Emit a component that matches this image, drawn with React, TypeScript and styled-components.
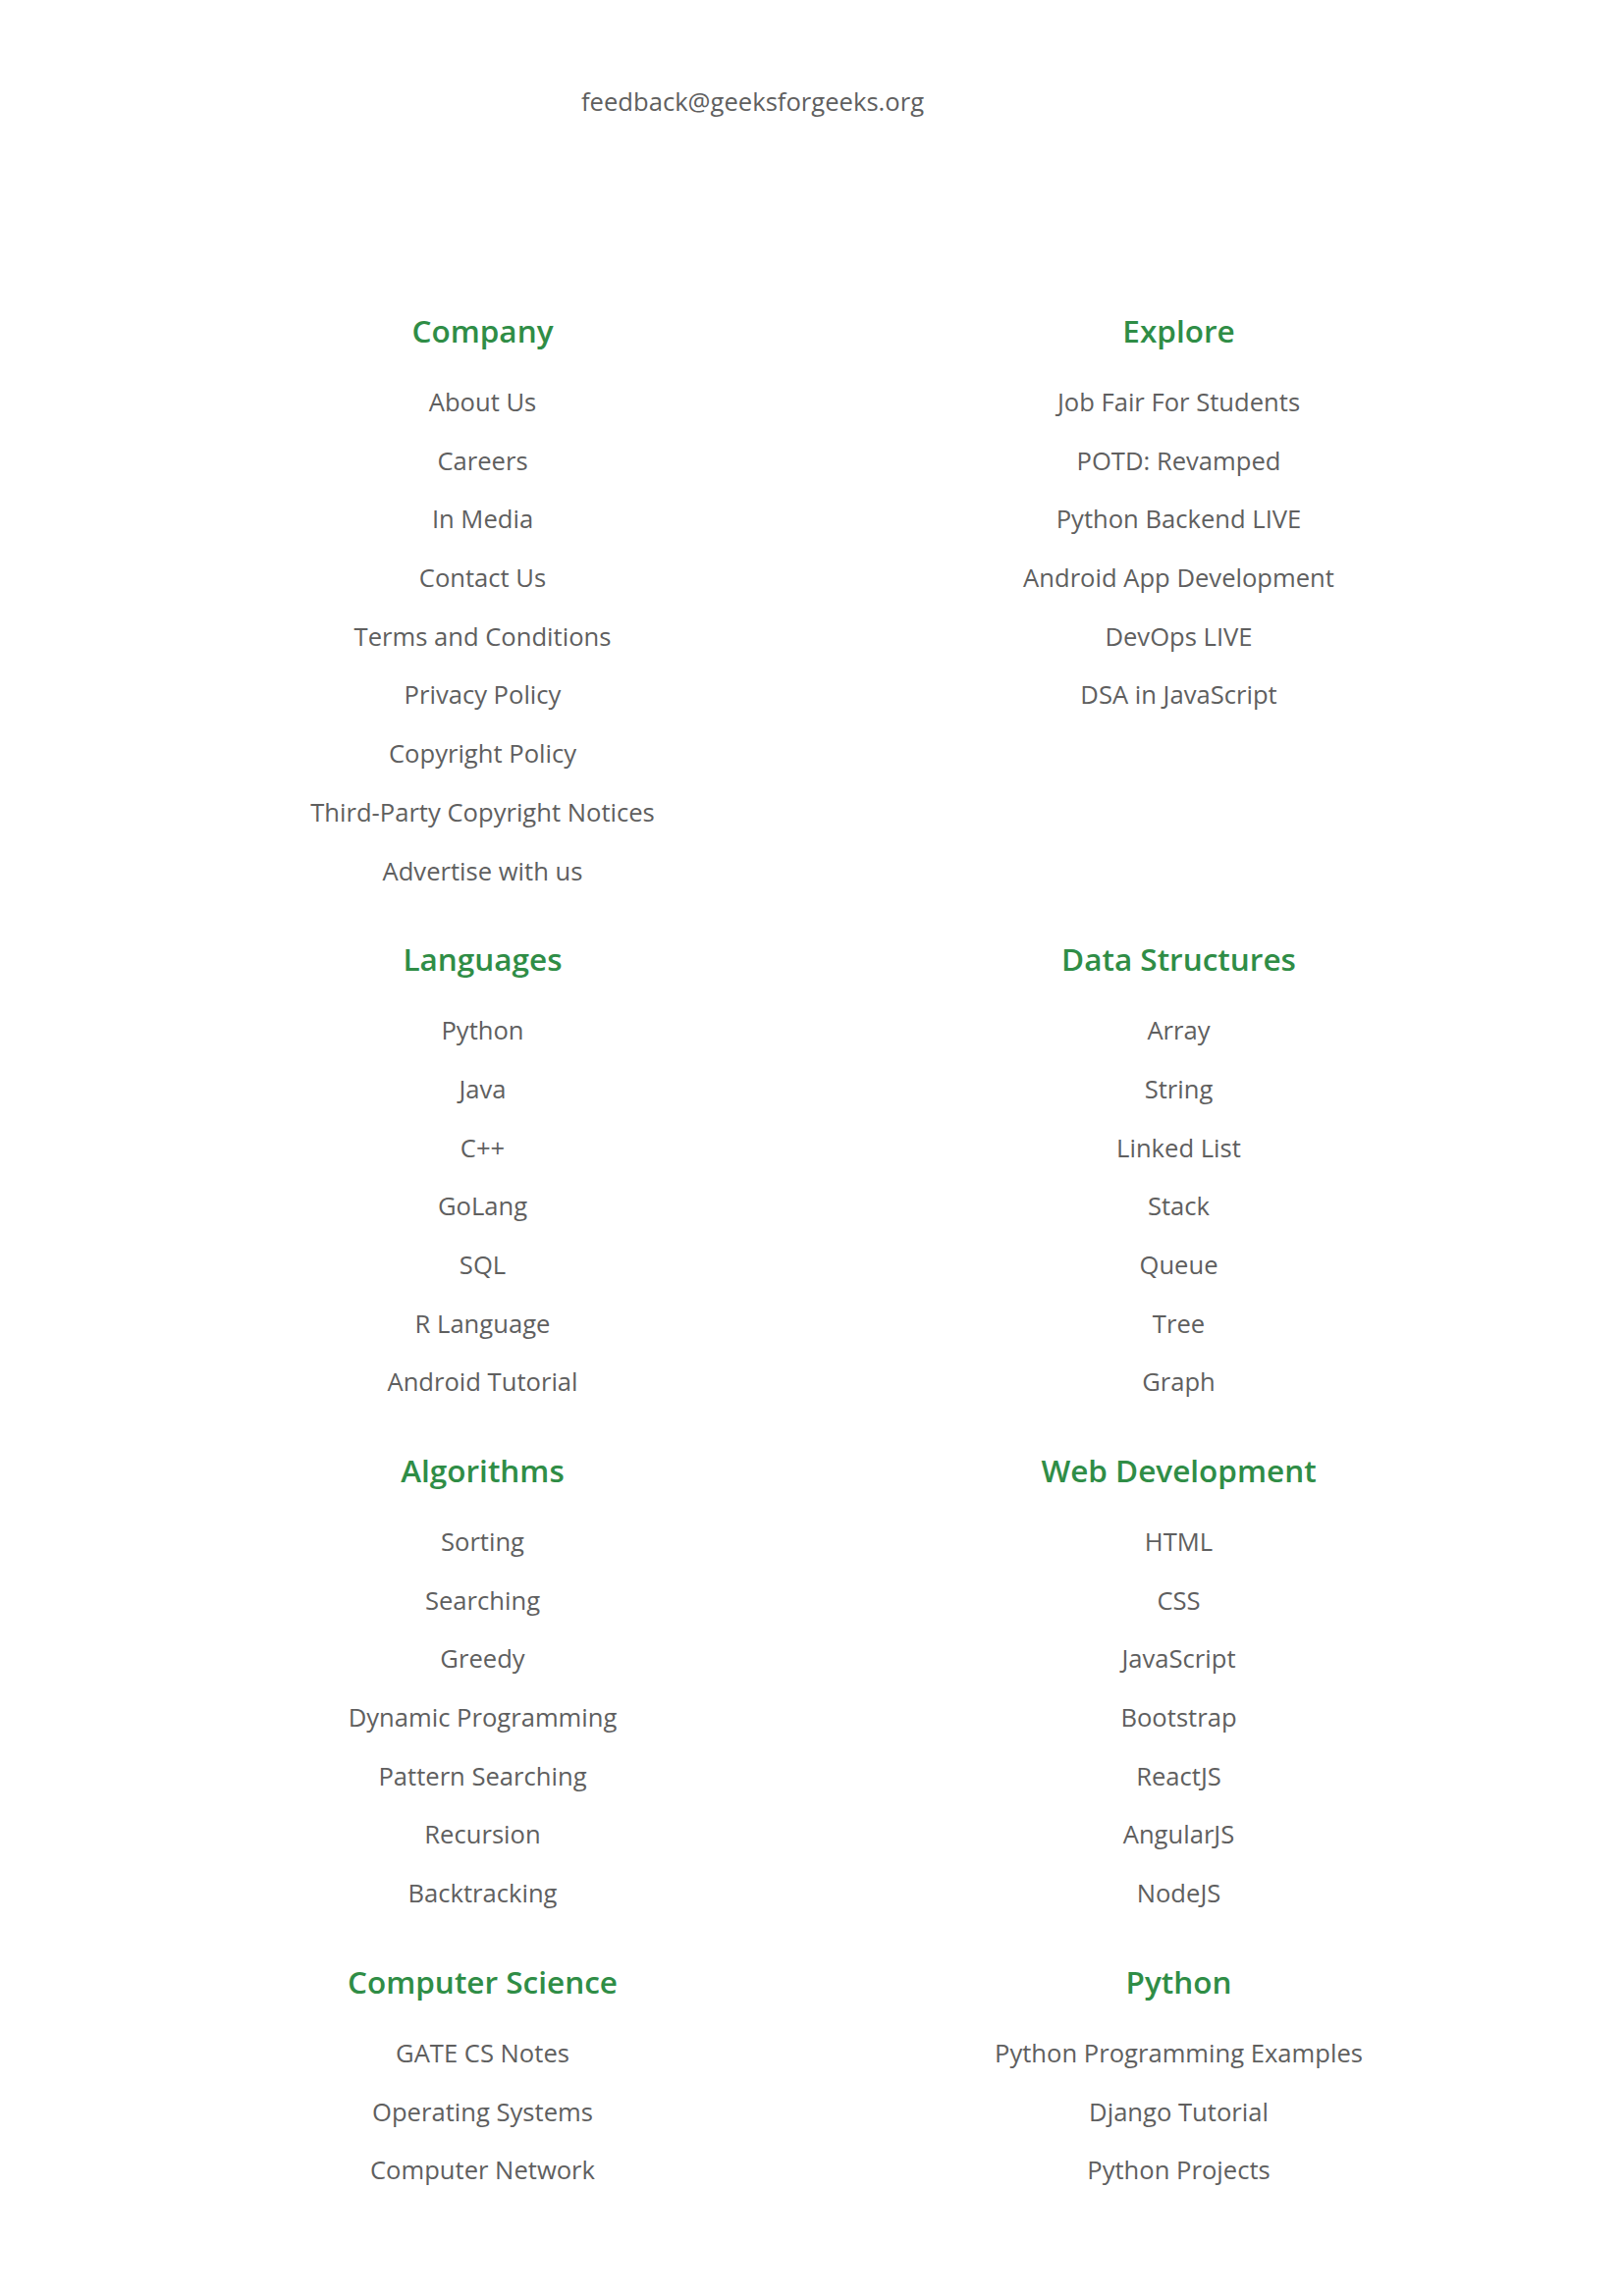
import styled, { createGlobalStyle } from "styled-components";

const GlobalStyle = createGlobalStyle`
  body {
    margin: 0;
    background: #fff;
    font-family: "Open Sans", "Noto Sans", sans-serif;
  }
`;

const sections = [
  {
    title: "Company",
    links: [
      "About Us",
      "Careers",
      "In Media",
      "Contact Us",
      "Terms and Conditions",
      "Privacy Policy",
      "Copyright Policy",
      "Third-Party Copyright Notices",
      "Advertise with us",
    ],
  },
  {
    title: "Explore",
    links: [
      "Job Fair For Students",
      "POTD: Revamped",
      "Python Backend LIVE",
      "Android App Development",
      "DevOps LIVE",
      "DSA in JavaScript",
    ],
  },
  {
    title: "Languages",
    links: ["Python", "Java", "C++", "GoLang", "SQL", "R Language", "Android Tutorial"],
  },
  {
    title: "Data Structures",
    links: ["Array", "String", "Linked List", "Stack", "Queue", "Tree", "Graph"],
  },
  {
    title: "Algorithms",
    links: [
      "Sorting",
      "Searching",
      "Greedy",
      "Dynamic Programming",
      "Pattern Searching",
      "Recursion",
      "Backtracking",
    ],
  },
  {
    title: "Web Development",
    links: ["HTML", "CSS", "JavaScript", "Bootstrap", "ReactJS", "AngularJS", "NodeJS"],
  },
  {
    title: "Computer Science",
    links: ["GATE CS Notes", "Operating Systems", "Computer Network"],
  },
  {
    title: "Python",
    links: ["Python Programming Examples", "Django Tutorial", "Python Projects"],
  },
];

const App = () => {
  return (
    <Footer>
      <GlobalStyle />
      <Contact>
        <Mail href="#">feedback@geeksforgeeks.org</Mail>
      </Contact>
      <LinkGrid>
        {sections.map(({ title, links }) => (
          <Section key={title}>
            <Heading>{title}</Heading>
            <LinkList>
              {links.map((link) => (
                <LinkItem key={link}>
                  <FooterLink href="#">{link}</FooterLink>
                </LinkItem>
              ))}
            </LinkList>
          </Section>
        ))}
      </LinkGrid>
    </Footer>
  );
};

const Footer = styled.footer`
  width: 100%;
  padding: 74px 0 60px;
  box-sizing: border-box;
`;

const Contact = styled.div`
  padding-left: 592px;
  height: 60px;
  margin-bottom: 182px;
  font-size: 25.6px;
  line-height: 60px;
`;

const Mail = styled.a`
  color: #5f5f5f;
  text-decoration: none;
`;

const LinkGrid = styled.div`
  display: grid;
  grid-template-columns: 1fr 1fr;
  row-gap: 39px;
  padding: 0 98px 0 137px;
`;

const Section = styled.section`
  text-align: center;
`;

const Heading = styled.h3`
  margin: 0 0 22px;
  font-size: 31.5px;
  font-weight: 600;
  line-height: 42px;
  color: #2f8d46;
`;

const LinkList = styled.ul`
  list-style: none;
  margin: 0;
  padding: 0;
`;

const LinkItem = styled.li`
  font-size: 25.6px;
  line-height: 59.7px;
  height: 59.7px;
`;

const FooterLink = styled.a`
  color: #5f5f5f;
  text-decoration: none;
`;

export default App;
